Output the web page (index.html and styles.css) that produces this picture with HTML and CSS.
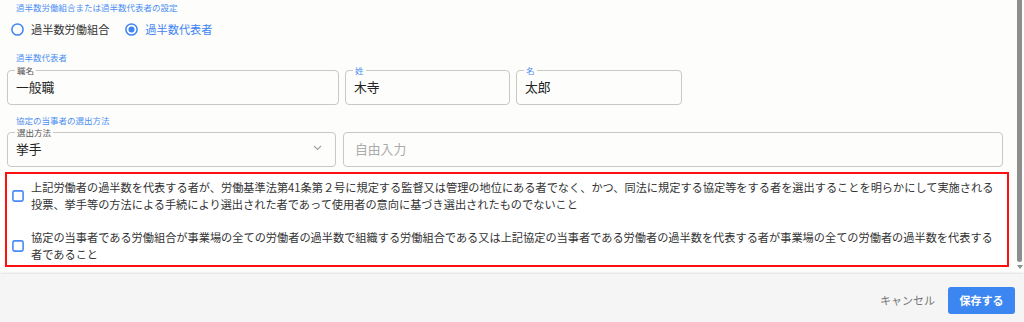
FILE: index.html
```html
<!DOCTYPE html>
<html lang="ja">
<head>
<meta charset="utf-8">
<title>過半数代表者の設定</title>
<link rel="stylesheet" href="styles.css">
</head>
<body>
<div class="page">
  <div class="scrollarea">
    <div class="content">
      <div class="section-label title">過半数労働組合または過半数代表者の設定</div>
      <div class="radios">
        <label class="radio">
          <svg class="radio-icon" width="13" height="13" viewBox="0 0 13 13"><circle cx="6.5" cy="6.5" r="5.6" fill="none" stroke="#3d84f4" stroke-width="1.5"/></svg>
          <span>過半数労働組合</span>
        </label>
        <label class="radio checked">
          <svg class="radio-icon" width="13" height="13" viewBox="0 0 13 13"><circle cx="6.5" cy="6.5" r="5.6" fill="none" stroke="#3d84f4" stroke-width="1.5"/><circle cx="6.5" cy="6.5" r="3" fill="#3d84f4"/></svg>
          <span>過半数代表者</span>
        </label>
      </div>

      <div class="section-label sub">過半数代表者</div>
      <div class="row-names">
        <fieldset class="field">
          <legend class="legend gray">職名</legend>
          <div class="value">一般職</div>
        </fieldset>
        <fieldset class="field">
          <legend class="legend">姓</legend>
          <div class="value">木寺</div>
        </fieldset>
        <fieldset class="field">
          <legend class="legend">名</legend>
          <div class="value">太郎</div>
        </fieldset>
      </div>

      <div class="section-label sub2">協定の当事者の選出方法</div>
      <div class="row-method">
        <fieldset class="field select">
          <legend class="legend gray">選出方法</legend>
          <div class="value">挙手</div>
          <svg class="chevron" width="9" height="6" viewBox="0 0 9 6"><polyline points="1,1 4.5,4.5 8,1" fill="none" stroke="#a0a0a0" stroke-width="1.1"/></svg>
        </fieldset>
        <div class="field plain">
          <div class="placeholder">自由入力</div>
        </div>
      </div>

      <div class="checks">
        <div class="check-item">
          <svg class="checkbox" width="12" height="12" viewBox="0 0 12 12"><rect x="0.9" y="0.9" width="10.2" height="10.2" rx="1.6" fill="#ffffff" stroke="#4a8af4" stroke-width="1.6"/></svg>
          <p class="check-text">上記労働者の過半数を代表する者が、労働基準法第41条第２号に規定する監督又は管理の地位にある者でなく、かつ、同法に規定する協定等をする者を選出することを明らかにして実施される投票、挙手等の方法による手続により選出された者であって使用者の意向に基づき選出されたものでないこと</p>
        </div>
        <div class="check-item">
          <svg class="checkbox" width="12" height="12" viewBox="0 0 12 12"><rect x="0.9" y="0.9" width="10.2" height="10.2" rx="1.6" fill="#ffffff" stroke="#4a8af4" stroke-width="1.6"/></svg>
          <p class="check-text">協定の当事者である労働組合が事業場の全ての労働者の過半数で組織する労働組合である又は上記協定の当事者である労働者の過半数を代表する者が事業場の全ての労働者の過半数を代表する者であること</p>
        </div>
      </div>
    </div>
    <div class="scrollbar">
      <div class="thumb"></div>
      <div class="arrow"></div>
    </div>
  </div>
  <div class="footer">
    <span class="cancel">キャンセル</span>
    <span class="save">保存する</span>
  </div>
</div>
</body>
</html>
```

FILE: styles.css
```css
* { box-sizing: border-box; }
html, body {
  margin: 0;
  padding: 0;
  background: #fdfdfb;
}
body {
  font-family: "Noto Sans CJK JP", "Noto Sans", sans-serif;
  color: #262626;
  width: 1024px;
  height: 322px;
  overflow: hidden;
}
.page {
  display: flex;
  flex-direction: column;
  height: 322px;
}
.scrollarea {
  display: flex;
  height: 274px;
  flex: none;
}
.content {
  flex: 1;
  padding: 1px 11px 0 7px;
}
.scrollbar {
  width: 10px;
  padding-left: 3px;
  display: flex;
  flex-direction: column;
}
.thumb {
  width: 5px;
  height: 262px;
  background: #8d8d8d;
  border-radius: 0 0 3px 3px;
}
.arrow {
  margin-top: 3px;
  width: 0;
  height: 0;
  border-left: 3px solid transparent;
  border-right: 3px solid transparent;
  border-top: 4px solid #8d8d8d;
}

.section-label {
  font-size: 8.5px;
  line-height: 12px;
  color: #4c8ff3;
  padding-left: 9px;
}
.radios {
  display: flex;
  align-items: center;
  gap: 16px;
  height: 20px;
  margin-top: 6px;
  padding-left: 4px;
}
.radio {
  display: flex;
  align-items: center;
  gap: 7px;
  font-size: 11.2px;
  line-height: 20px;
  color: #333;
}
.radio.checked { color: #3d84f4; }
.radio-icon { display: block; flex: none; }

.sub { margin-top: 12px; }
.sub2 { margin-top: 9px; }

.row-names {
  display: grid;
  grid-template-columns: 332px 165px 166px;
  gap: 6px;
  margin-top: 1px;
}
.row-method {
  display: grid;
  grid-template-columns: 329px 1fr;
  gap: 7px;
  align-items: end;
}
.field {
  margin: 0;
  min-width: 0;
  border: 1px solid #c8c8c6;
  border-radius: 4px;
  padding: 1px 8px 7px 8px;
  background: #fdfdfb;
}
.legend {
  font-size: 8.5px;
  line-height: 12px;
  padding: 0 2px;
  margin-left: -1px;
  color: #4c8ff3;
}
.legend.gray { color: #555; }
.value {
  font-size: 12.8px;
  line-height: 20px;
  color: #222;
}
.select {
  display: flex;
  align-items: center;
  justify-content: space-between;
}
.select .value { flex: 1; }
.chevron { display: block; margin-right: 5px; margin-top: -2px; }
.plain {
  padding: 6px 11px 7px 11px;
}
.placeholder {
  font-size: 12.8px;
  line-height: 20px;
  color: #ababab;
}

.checks {
  margin: 5px -6px 0 -2px;
  border: 2px solid #ff1010;
  padding: 5px 7px 2px 5px;
  display: flex;
  flex-direction: column;
  gap: 16px;
  background: #ffffff;
}
.check-item {
  display: flex;
  align-items: center;
  gap: 7px;
}
.checkbox {
  flex: none;
  display: block;
}
.check-text {
  margin: 0;
  flex: 1;
  font-size: 11.2px;
  line-height: 17px;
  color: #333;
}

.footer {
  flex: 1;
  background: #f5f5f5;
  box-shadow: 0 -1px 2px rgba(0, 0, 0, 0.12);
  display: flex;
  align-items: center;
  justify-content: flex-end;
  gap: 13px;
  padding: 4px 9px 0 0;
}
.cancel {
  font-size: 11px;
  color: #757575;
}
.save {
  width: 67px;
  height: 27px;
  border-radius: 3px;
  background: #3b86f1;
  color: #fff;
  font-size: 11px;
  font-weight: bold;
  display: flex;
  align-items: center;
  justify-content: center;
}
```
